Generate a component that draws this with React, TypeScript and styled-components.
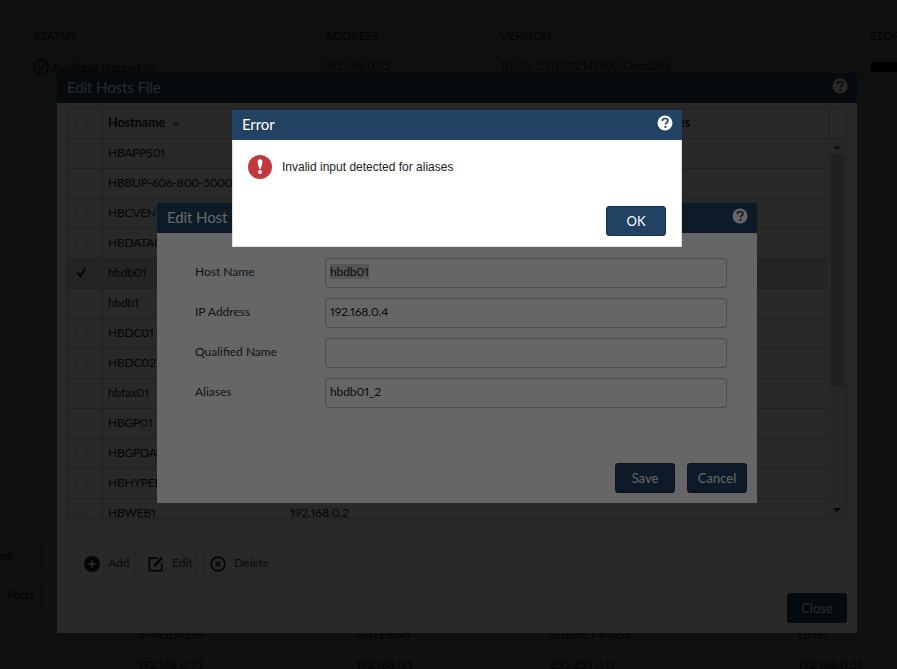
import styled, { createGlobalStyle } from 'styled-components';

const GlobalStyle = createGlobalStyle`
  html, body {
    margin: 0;
    padding: 0;
    background: #fff;
  }
  body {
    font-family: Lato, "Open Sans", sans-serif;
    font-feature-settings: "pnum";
    color: #222;
  }
`;

const hosts = [
  'HBAPPS01',
  'HBBUP-606-800-50009',
  'HBCVENTER',
  'HBDATA01',
  'hbdb01',
  'hbdb1',
  'HBDC01',
  'HBDC02',
  'hbfax01',
  'HBGP01',
  'HBGPDATA',
  'HBHYPERV',
  'HBWEB1',
];

const Page = styled.div`
  position: relative;
  width: 897px;
  height: 669px;
  overflow: hidden;
  background: #fff;
  font-size: 12px;
`;

const TopTable = styled.div`
  padding-top: 22px;
`;

const TopRow = styled.div<{ $selected?: boolean }>`
  display: grid;
  grid-template-columns: 27px 291px 175px 370px 34px;
  height: 30px;
  align-items: center;
  background: ${({ $selected }) => ($selected ? '#f0f6ff' : 'transparent')};
`;

const HeadCell = styled.div`
  padding: 0 0 3px 7px;
  line-height: 27px;
  color: #333;
  white-space: nowrap;
  overflow: hidden;
`;

const StatusCell = styled.div`
  display: flex;
  align-items: center;
  gap: 3px;
  padding-left: 6px;
  white-space: nowrap;
`;

const StorageBar = styled.div`
  width: 34px;
  height: 10px;
  margin-left: 8px;
  background: #0b1c33;
`;

const Lower = styled.div`
  display: flex;
  margin-top: 460px;
`;

const SideTabs = styled.div`
  width: 130px;
  display: flex;
  flex-direction: column;
  gap: 10px;
`;

const SideTab = styled.div<{ $height: number; $pad: number }>`
  width: 42px;
  height: ${({ $height }) => $height}px;
  box-sizing: border-box;
  border-right: 1px solid #ccc;
  display: flex;
  align-items: center;
  justify-content: flex-end;
  padding-right: ${({ $pad }) => $pad}px;
  white-space: nowrap;
`;

const LowerTable = styled.div`
  flex: 1;
  margin-top: 77px;
`;

const LowerRow = styled.div`
  display: grid;
  grid-template-columns: 218px 194px 248px 1fr;
  height: 30px;
  align-items: center;
  padding-left: 8px;
  color: #333;
`;

const Overlay = styled.div`
  position: absolute;
  inset: 0;
  background: rgba(0, 0, 0, 0.6);
`;

const Modal = styled.div<{ $left: number; $top: number; $width: number; $height: number }>`
  position: absolute;
  left: ${({ $left }) => $left}px;
  top: ${({ $top }) => $top}px;
  width: ${({ $width }) => $width}px;
  height: ${({ $height }) => $height}px;
  display: flex;
  flex-direction: column;
  background: #fff;
  box-sizing: border-box;
`;

const ModalHeader = styled.div`
  flex: none;
  height: 30px;
  box-sizing: border-box;
  display: flex;
  align-items: center;
  justify-content: space-between;
  padding: 0 10px 3px;
  background: #214263;
  color: #fff;
  font-size: 15px;
  letter-spacing: -0.1px;
`;

const HelpCircle = styled.span`
  display: flex;
  margin-right: -1px;
  margin-top: -2px;
`;

const ListBody = styled.div`
  flex: 1;
  padding: 5px 10px 10px;
  display: flex;
  flex-direction: column;
`;

const HostTable = styled.div`
  position: relative;
  height: 411px;
  box-sizing: border-box;
  border: 1px solid #c8c8c8;
  overflow: hidden;
  color: #222;
`;

const HostHead = styled.div`
  display: grid;
  grid-template-columns: 35px 187px 356px 183px 1fr;
  height: 29px;
  border-bottom: 1px solid #c8c8c8;
  font-weight: 700;
  font-size: 12.5px;
  align-items: center;
`;

const HostHeadCell = styled.div<{ $last?: boolean }>`
  height: 100%;
  display: flex;
  align-items: center;
  gap: 7px;
  padding: 0 0 2px 4px;
  box-sizing: border-box;
  white-space: nowrap;
  overflow: hidden;
  border-left: 1px solid ${({ $last }) => ($last ? '#c8c8c8' : 'transparent')};
`;

const CheckCell = styled.div`
  height: 100%;
  box-sizing: border-box;
  padding-left: 7px;
  border-right: 1px solid #c8c8c8;
  display: flex;
  align-items: center;
`;

const CheckBox = styled.span`
  position: relative;
  width: 10px;
  height: 10px;
  border: 1px solid #d4d4d4;
  border-radius: 2px;
  display: block;
  margin-bottom: 1px;
`;

const CheckMark = styled.svg`
  position: absolute;
  left: 0;
  top: -1px;
`;

const SortArrow = styled.span`
  width: 0;
  height: 0;
  border-left: 4px solid transparent;
  border-right: 4px solid transparent;
  border-bottom: 4px solid #7f9a4b;
`;

const HostRow = styled.div<{ $selected?: boolean }>`
  display: grid;
  grid-template-columns: 35px 187px 1fr;
  height: 30px;
  box-sizing: border-box;
  border-bottom: 1px solid #c8c8c8;
  align-items: center;
  margin-right: 18px;
  background: ${({ $selected }) => ($selected ? '#d5e4e8' : 'transparent')};
  font-size: 12px;
`;

const HostName = styled.div`
  padding: 0 0 3px 5px;
  letter-spacing: -0.2px;
  white-space: nowrap;
`;

const HostAddress = styled.div`
  padding-bottom: 3px;
  white-space: nowrap;
`;

const ScrollBar = styled.div`
  position: absolute;
  top: 30px;
  right: 0;
  bottom: 0;
  width: 18px;
  background: #f8f8f8;
  display: flex;
  flex-direction: column;
  align-items: center;
`;

const ScrollArrow = styled.span<{ $down?: boolean }>`
  flex: none;
  margin: 6px 0;
  width: 0;
  height: 0;
  border-left: 4px solid transparent;
  border-right: 4px solid transparent;
  border-bottom: ${({ $down }) => ($down ? '0' : '4px solid #555')};
  border-top: ${({ $down }) => ($down ? '4px solid #222' : '0')};
`;

const ScrollThumb = styled.div`
  flex: none;
  width: 13px;
  height: 232px;
  background: #cdcdcd;
  margin-top: -1px;
`;

const ScrollSpace = styled.div`
  flex: 1;
`;

const ToolBar = styled.div`
  display: flex;
  gap: 6px;
  margin: 29px 0 0 10px;
`;

const ToolButton = styled.div<{ $width: number }>`
  width: ${({ $width }) => $width}px;
  height: 31px;
  box-sizing: border-box;
  display: flex;
  align-items: center;
  gap: 8px;
  padding: 0 0 0 6px;
  border: 1px solid #d8d8d8;
  border-radius: 3px;
  color: #444;
  font-size: 12px;
`;

const ToolLabel = styled.span`
  padding-bottom: 2px;
`;

const Footer = styled.div`
  margin-top: auto;
  display: flex;
  justify-content: flex-end;
  gap: 12px;
`;

const Button = styled.div`
  width: 60px;
  height: 30px;
  box-sizing: border-box;
  display: flex;
  align-items: center;
  justify-content: center;
  background: #214263;
  border: 1px solid #17324e;
  border-radius: 3px;
  color: #fff;
  font-size: 13px;
`;

const HostForm = styled.div`
  flex: 1;
  display: flex;
  flex-direction: column;
  padding: 25px 10px 10px 38px;
`;

const FormRows = styled.div`
  display: flex;
  flex-direction: column;
  gap: 10px;
`;

const FormRow = styled.div`
  display: grid;
  grid-template-columns: 130px 402px;
  align-items: center;
  height: 30px;
`;

const FormLabel = styled.label`
  color: #1e3348;
  font-size: 12px;
  padding-bottom: 3px;
`;

const FormInput = styled.div`
  height: 30px;
  box-sizing: border-box;
  border: 1px solid #bbb;
  border-radius: 3px;
  padding: 0 4px 3px;
  display: flex;
  align-items: center;
  color: #222;
  font-size: 12px;
  letter-spacing: -0.1px;
`;

const Selected = styled.span`
  background: #d4d4d4;
`;

const ErrorBody = styled.div`
  flex: 1;
  display: flex;
  flex-direction: column;
  padding: 15px 15px 10px;
  border: 1px solid #ddd;
  border-top: 0;
`;

const ErrorMessage = styled.div`
  display: flex;
  align-items: center;
  gap: 10px;
  font-family: "Liberation Sans", Arial, sans-serif;
  font-size: 12px;
  color: #222;
`;

const HelpIcon = () => (
  <svg width="16" height="16" viewBox="0 0 16 16">
    <circle cx="8" cy="8" r="7.5" fill="#fff" />
    <path d="M5.2 6.1C5.3 4.4 6.5 3.5 8.1 3.5c1.600 0 2.800 0.900 2.800 2.300 0 1.200-0.700 1.700-1.500 2.200-0.700 0.400-0.900 0.700-0.900 1.400" fill="none" stroke="#214263" strokeWidth="1.700" />
    <circle cx="8.400" cy="11.900" r="1.100" fill="#214263" />
  </svg>
);

const ErrorIcon = () => (
  <svg width="24" height="24" viewBox="0 0 24 24">
    <circle cx="12" cy="12" r="12" fill="#c1383f" />
    <path d="M9.600 6.200C9.600 4.900 10.700 4.200 12 4.200s2.400 0.700 2.400 2c0 2-1.200 5.500-1.500 7.500h-1.800c-0.300-2-1.500-5.500-1.500-7.500Z" fill="#fff" />
    <circle cx="12" cy="17" r="1.900" fill="#fff" />
  </svg>
);

const AddIcon = () => (
  <svg width="16" height="16" viewBox="0 0 16 16">
    <circle cx="8" cy="8" r="8" fill="#1c2228" />
    <path d="M8 4.500v7M4.500 8h7" stroke="#fff" strokeWidth="2" />
  </svg>
);

const EditIcon = () => (
  <svg width="16" height="16" viewBox="0 0 18 18">
    <path d="M11 2.500H1.500v14h14V8" fill="none" stroke="#1c2228" strokeWidth="2" />
    <path d="M14.800 1.200l2 2-8 8.300-3 1 1-3Z" fill="#1c2228" />
  </svg>
);

const DeleteIcon = () => (
  <svg width="16" height="16" viewBox="0 0 17 17">
    <circle cx="8.500" cy="8.500" r="7.300" fill="none" stroke="#1c2228" strokeWidth="1.800" />
    <path d="M6 6l5 5M11 6l-5 5" stroke="#1c2228" strokeWidth="1.800" />
  </svg>
);

const StatusIcon = () => (
  <svg width="16" height="16" viewBox="0 0 16 16">
    <circle cx="8" cy="8" r="7" fill="none" stroke="#222" strokeWidth="1.500" />
    <path d="M4.500 8l2.500 2.700 4.500-5" fill="none" stroke="#222" strokeWidth="1.500" />
  </svg>
);

const App = () => (
  <Page>
    <GlobalStyle />

    <TopTable>
      <TopRow>
        <span />
        <HeadCell>STATUS</HeadCell>
        <HeadCell>ADDRESS</HeadCell>
        <HeadCell>VERSION</HeadCell>
        <HeadCell>STORAGE</HeadCell>
      </TopRow>
      <TopRow $selected>
        <span />
        <StatusCell>
          <StatusIcon />
          Available (logged in)
        </StatusCell>
        <HeadCell>192.168.0.75</HeadCell>
        <HeadCell>10.1.0-2.201712141700.CentOS6</HeadCell>
        <StorageBar />
      </TopRow>
    </TopTable>

    <Lower>
      <SideTabs>
        <SideTab $height={26} $pad={27}>Network</SideTab>
        <SideTab $height={32} $pad={7}>Ports</SideTab>
      </SideTabs>
      <LowerTable>
        <LowerRow>
          <span>IP ADDRESS</span>
          <span>GATEWAY</span>
          <span>SUBNET MASK</span>
          <span>DNS1</span>
        </LowerRow>
        <LowerRow>
          <span>192.168.0.75</span>
          <span>192.168.0.1</span>
          <span>255.255.0.0</span>
          <span>192.168.0.31</span>
        </LowerRow>
      </LowerTable>
    </Lower>

    <Overlay />

    <Modal $left={57} $top={73} $width={800} $height={560}>
      <ModalHeader>
        Edit Hosts File
        <HelpCircle>
          <HelpIcon />
        </HelpCircle>
      </ModalHeader>
      <ListBody>
        <HostTable>
          <HostHead>
            <CheckCell>
              <CheckBox />
            </CheckCell>
            <HostHeadCell>
              Hostname
              <SortArrow />
            </HostHeadCell>
            <HostHeadCell>IP Address</HostHeadCell>
            <HostHeadCell>Aliases</HostHeadCell>
            <HostHeadCell $last />
          </HostHead>
          {hosts.map((host) => (
            <HostRow key={host} $selected={host === 'hbdb01'}>
              <CheckCell>
                <CheckBox>
                  {host === 'hbdb01' && (
                    <CheckMark width="11" height="11" viewBox="0 0 11 11">
                      <path d="M1.500 5.500l2.800 3.500 5-7.500" fill="none" stroke="#111" strokeWidth="2" />
                    </CheckMark>
                  )}
                </CheckBox>
              </CheckCell>
              <HostName>{host}</HostName>
              {host === 'HBWEB1' && <HostAddress>192.168.0.2</HostAddress>}
            </HostRow>
          ))}
          <ScrollBar>
            <ScrollArrow />
            <ScrollThumb />
            <ScrollSpace />
            <ScrollArrow $down />
          </ScrollBar>
        </HostTable>
        <ToolBar>
          <ToolButton $width={58}>
            <AddIcon />
            <ToolLabel>Add</ToolLabel>
          </ToolButton>
          <ToolButton $width={56}>
            <EditIcon />
            <ToolLabel>Edit</ToolLabel>
          </ToolButton>
          <ToolButton $width={72}>
            <DeleteIcon />
            <ToolLabel>Delete</ToolLabel>
          </ToolButton>
        </ToolBar>
        <Footer>
          <Button>Close</Button>
        </Footer>
      </ListBody>
    </Modal>

    <Overlay />

    <Modal $left={157} $top={203} $width={600} $height={300}>
      <ModalHeader>
        Edit Host
        <HelpCircle>
          <HelpIcon />
        </HelpCircle>
      </ModalHeader>
      <HostForm>
        <FormRows>
          <FormRow>
            <FormLabel>Host Name</FormLabel>
            <FormInput>
              <Selected>hbdb01</Selected>
            </FormInput>
          </FormRow>
          <FormRow>
            <FormLabel>IP Address</FormLabel>
            <FormInput>192.168.0.4</FormInput>
          </FormRow>
          <FormRow>
            <FormLabel>Qualified Name</FormLabel>
            <FormInput />
          </FormRow>
          <FormRow>
            <FormLabel>Aliases</FormLabel>
            <FormInput>hbdb01_2</FormInput>
          </FormRow>
        </FormRows>
        <Footer>
          <Button>Save</Button>
          <Button>Cancel</Button>
        </Footer>
      </HostForm>
    </Modal>

    <Overlay />

    <Modal $left={232} $top={110} $width={450} $height={137}>
      <ModalHeader>
        Error
        <HelpCircle>
          <HelpIcon />
        </HelpCircle>
      </ModalHeader>
      <ErrorBody>
        <ErrorMessage>
          <ErrorIcon />
          Invalid input detected for aliases
        </ErrorMessage>
        <Footer>
          <Button>OK</Button>
        </Footer>
      </ErrorBody>
    </Modal>
  </Page>
);

export default App;
